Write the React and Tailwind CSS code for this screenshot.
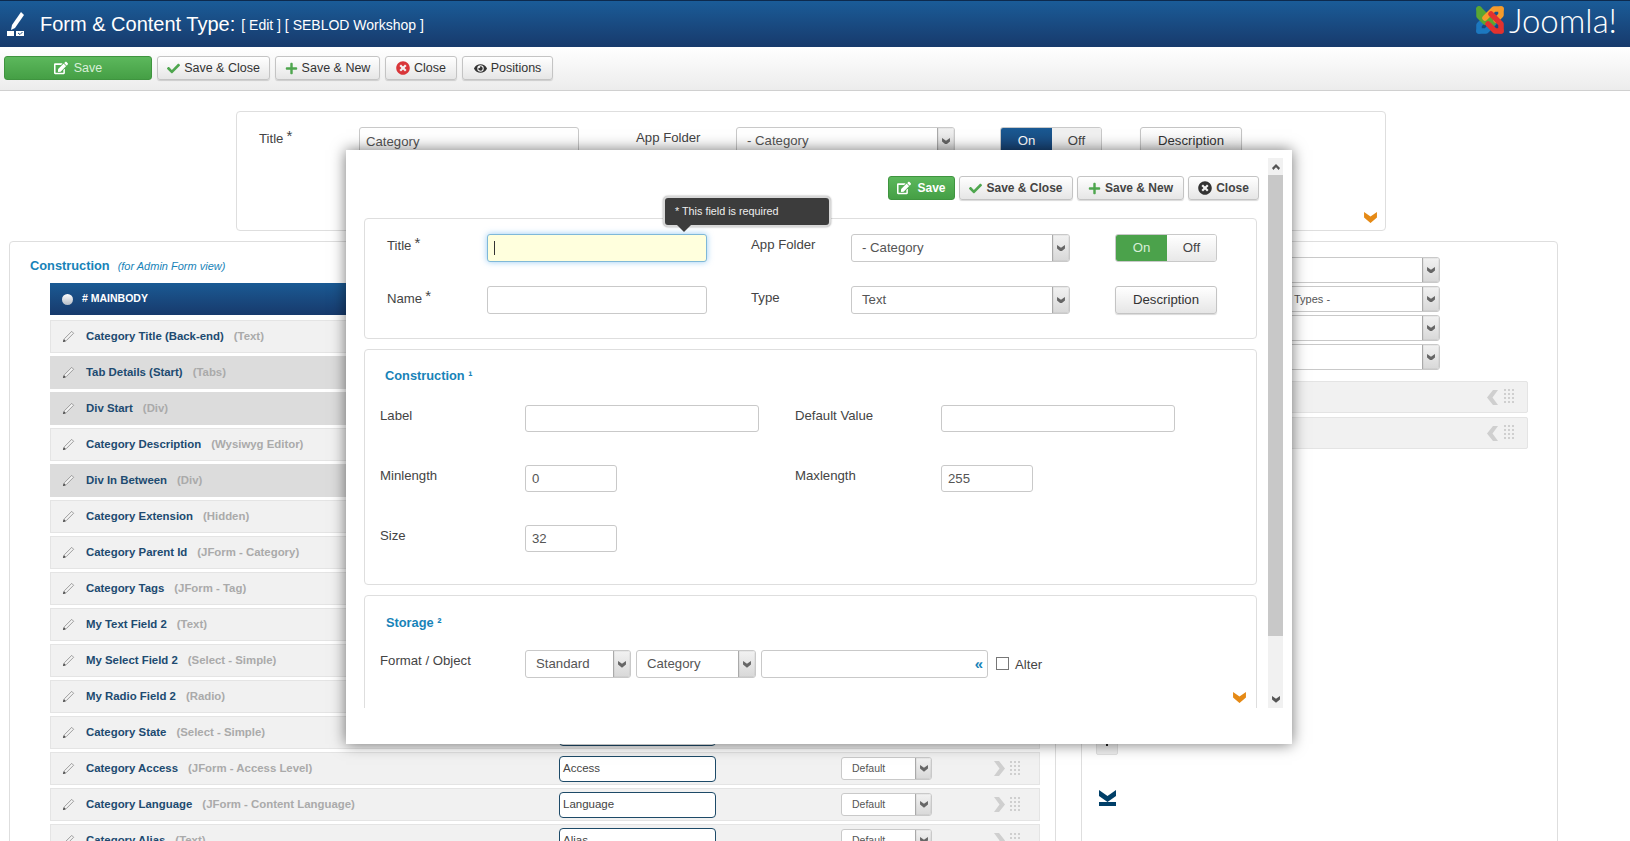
import { FaCheck, FaEdit, FaEye, FaPlus, FaTimesCircle } from 'react-icons/fa';

const rows = [
  { name: 'Category Title (Back-end)', type: '(Text)', field: 'Title' },
  { name: 'Tab Details (Start)', type: '(Tabs)', field: 'Details', dark: true },
  { name: 'Div Start', type: '(Div)', field: 'Div', dark: true },
  { name: 'Category Description', type: '(Wysiwyg Editor)', field: 'Description' },
  { name: 'Div In Between', type: '(Div)', field: 'Div', dark: true },
  { name: 'Category Extension', type: '(Hidden)', field: 'Extension' },
  { name: 'Category Parent Id', type: '(JForm - Category)', field: 'Parent' },
  { name: 'Category Tags', type: '(JForm - Tag)', field: 'Tags' },
  { name: 'My Text Field 2', type: '(Text)', field: 'Text' },
  { name: 'My Select Field 2', type: '(Select - Simple)', field: 'Select' },
  { name: 'My Radio Field 2', type: '(Radio)', field: 'Radio' },
  { name: 'Category State', type: '(Select - Simple)', field: 'State' },
  { name: 'Category Access', type: '(JForm - Access Level)', field: 'Access' },
  { name: 'Category Language', type: '(JForm - Content Language)', field: 'Language' },
  { name: 'Category Alias', type: '(Text)', field: 'Alias' },
];

function JoomlaLogo() {
  return (
    <svg width="32" height="32" viewBox="0 0 32 32" fill="none" strokeLinecap="round" strokeLinejoin="round">
      <path d="M5 27 L5 21 L13 13 L16 16" stroke="#1c78c0" strokeWidth="5.5" />
      <path d="M5 27 L12 27 L20 19" stroke="#1c78c0" strokeWidth="5.5" />
      <path d="M5 5 L16 16 L19 19" stroke="#5aa632" strokeWidth="5.5" />
      <path d="M5 5 L5 12 L11 18" stroke="#5aa632" strokeWidth="5.5" />
      <path d="M27 5 L20 5 L11 14" stroke="#f59b2b" strokeWidth="5.5" />
      <path d="M27 5 L27 11 L22 16" stroke="#f59b2b" strokeWidth="5.5" />
      <path d="M27 27 L27 20 L17 10" stroke="#e2322e" strokeWidth="5.5" />
      <path d="M27 27 L21 27 L14 20" stroke="#e2322e" strokeWidth="5.5" />
    </svg>
  );
}

function HeaderIcon() {
  return (
    <svg width="20" height="24" viewBox="0 0 20 24" fill="white">
      <path d="M15 0 L18 3 L9 16 L5 18 L6 13 Z" />
      <rect x="1" y="19" width="7" height="5" />
      <rect x="10" y="19" width="8" height="5" />
      <path d="M12 21 L14 22.5 L16.5 20" stroke="#1a4a80" strokeWidth="1" fill="none" />
    </svg>
  );
}

function PencilIcon() {
  return (
    <svg width="13" height="13" viewBox="0 0 14 14" fill="none">
      <path d="M1.5 12.5 L2.5 9.5 L10.5 1.5 L12.5 3.5 L4.5 11.5 Z" stroke="#8a8a8a" strokeWidth="0.9" fill="#f4f4f4" />
      <path d="M1 13 L2 10 L4 12 Z" fill="#444" />
    </svg>
  );
}

function Grip() {
  return (
    <svg width="12" height="16" viewBox="0 0 12 16" fill="#cfcfcf">
      {[0, 4, 8, 12].map((y) => [0, 4, 8].map((x) => <rect key={`${x}-${y}`} x={x} y={y} width="2" height="2" />))}
    </svg>
  );
}

// heavy chevrons, the icon set of the page draws them thicker than react-icons
function ChevronDown({ className = '', size = 13 }) {
  return (
    <svg className={className} width={size} height={size * 0.85} viewBox="0 0 14 12" fill="currentColor">
      <path d="M0 0 L7 5 L14 0 L14 6 L7 12 L0 6 Z" />
    </svg>
  );
}

function ChevronUp({ className = '', size = 8 }) {
  return (
    <svg className={className} width={size} height={size * 0.75} viewBox="0 0 12 9" fill="currentColor">
      <path d="M0 6 L6 0 L12 6 L10 9 L6 5 L2 9 Z" />
    </svg>
  );
}

function ChevronSide({ left = false }) {
  return (
    <svg width="11" height="15" viewBox="0 0 11 15" fill="#cfcfcf">
      <path d={left ? 'M11 0 L6 0 L0 7.5 L6 15 L11 15 L5.5 7.5 Z' : 'M0 0 L5 0 L11 7.5 L5 15 L0 15 L5.5 7.5 Z'} />
    </svg>
  );
}

function Button({ icon, children, className = '' }) {
  return (
    <button className={`flex h-[24px] items-center justify-center gap-1 rounded-[3px] border border-[#c4c4c4] bg-gradient-to-b from-white to-[#e6e6e6] text-[12.5px] text-[#333] shadow-[0_1px_1px_rgba(0,0,0,0.15)] ${className}`}>
      {icon}
      {children}
    </button>
  );
}

function ModalButton({ icon, children, className = '' }) {
  return (
    <button className={`flex h-[24px] items-center justify-center gap-1 rounded-[3px] border border-[#c4c4c4] bg-gradient-to-b from-white to-[#e6e6e6] text-[12px] font-bold text-[#444] shadow-[0_1px_1px_rgba(0,0,0,0.15)] ${className}`}>
      {icon}
      {children}
    </button>
  );
}

function Select({ value, className = '', arrow = 'w-[17px]', pad = 'pl-[10px]' }) {
  return (
    <div className={`flex items-stretch overflow-hidden rounded-[3px] border border-[#c9c9c9] bg-white ${className}`}>
      <span className={`flex flex-1 items-center truncate text-[#555] ${pad}`}>{value}</span>
      <span className={`flex items-center justify-center border-l border-[#aaa] bg-gradient-to-b from-[#f2f2f2] to-[#d8d8d8] shadow-[inset_0_0_1px_#888] ${arrow}`}>
        <ChevronDown size={8} className="text-[#666]" />
      </span>
    </div>
  );
}

function Input({ className = '' }) {
  return <div className={`rounded-[3px] border border-[#c9c9c9] bg-white ${className}`} />;
}

function Star() {
  return <span className="relative top-[-2px] ml-[3px] text-[15px]">*</span>;
}

function Row({ row }) {
  const bg = row.dark ? 'bg-[#dcdcdc] border-[#dcdcdc]' : 'bg-[#f1f1f1] border-[#e4e4e4]';
  return (
    <div className={`flex h-[33px] items-center border pl-[11px] ${bg}`}>
      <div className="flex w-[497px] items-center">
        <PencilIcon />
        <span className="ml-[11px] text-[11.4px] font-bold text-[#204a70]">{row.name}</span>
        <span className="ml-[10px] text-[11.4px] font-bold text-[#aaa]">{row.type}</span>
      </div>
      <div className="flex h-[26px] w-[157px] items-center rounded-[4px] border border-[#1d4a68] bg-white pl-[3px] text-[11.5px] text-[#444]">{row.field}</div>
      <Select value="Default" className="ml-[125px] h-[23px] w-[91px] text-[10.5px]" arrow="w-[16px]" />
      <span className="ml-[62px] flex"><ChevronSide /></span>
      <span className="ml-[5px] flex"><Grip /></span>
    </div>
  );
}

function SideRow() {
  return (
    <div className="flex h-[32px] w-[432px] items-center justify-end rounded-[2px] border border-[#e4e4e4] bg-[#f1f1f1] pr-[11px]">
      <ChevronSide left />
      <span className="ml-[6px] flex"><Grip /></span>
    </div>
  );
}

function PageBehind() {
  return (
    <main>
      <section className="ml-[236px] mt-[20px] h-[120px] w-[1150px] rounded-[4px] border border-[#dedede] pl-[22px] pt-[15px] text-[13.2px] text-[#444]">
        <div className="flex items-start">
          <span className="w-[100px]">Title<Star /></span>
          <div className="flex h-[28px] w-[220px] items-center rounded-[3px] border border-[#c9c9c9] pl-[6px] pt-[1px] text-[#555]">Category</div>
          <span className="ml-[57px] mt-[1px] w-[100px]">App Folder</span>
          <Select value="- Category" className="h-[28px] w-[219px]" />
          <div className="ml-[45px] flex h-[28px] w-[102px] overflow-hidden rounded-[3px] border border-[#c9c9c9]">
            <span className="flex w-[51px] items-center justify-center bg-gradient-to-b from-[#1a5a94] to-[#173f70] text-white">On</span>
            <span className="flex flex-1 items-center justify-center bg-[#f0f0f0]">Off</span>
          </div>
          <Button className="ml-[38px] !h-[28px] w-[102px] !text-[13.2px]">Description</Button>
        </div>
        <div className="flex justify-end pr-[8px] pt-[57px]">
          <ChevronDown size={13} className="text-[#e58a16]" />
        </div>
      </section>

      <section className="ml-[9px] mt-[10px] flex h-[700px] w-[1549px] rounded-[4px] border border-[#dedede]">
        <div className="w-[1046px] shrink-0 border-r border-[#dedede] pl-[20px] pt-[14px]">
          <div className="flex items-baseline gap-[8px]">
            <span className="text-[12.8px] font-bold text-[#1883b8]">Construction</span>
            <span className="text-[11px] italic text-[#1883b8]">(for Admin Form view)</span>
          </div>
          <div className="ml-[20px] mt-[8px] w-[990px]">
            <div className="flex h-[32px] items-center bg-gradient-to-b from-[#1a5a94] to-[#173a6c] pl-[12px]">
              <span className="h-[11px] w-[11px] rounded-full bg-gradient-to-b from-white to-[#b5bcc6]" />
              <span className="ml-[9px] text-[10.5px] font-bold text-white"># MAINBODY</span>
            </div>
            <div className="mt-[5px] flex flex-col gap-[3px]">
              {rows.map((row) => <Row key={row.name} row={row} />)}
            </div>
          </div>
        </div>
        <div className="ml-[25px] flex-1 border-l border-[#dedede] pl-[14px] pt-[15px]">
          <div className="flex flex-col gap-[3px]">
            {['', '- Select Object Types -', '', ''].map((v, i) => (
              <Select key={i} value={v} pad={v ? 'pl-[122px]' : 'pl-[10px]'} className="h-[26px] w-[344px] text-[11px]" />
            ))}
          </div>
          <div className="mt-[11px] flex flex-col gap-[4px]">
            <SideRow />
            <SideRow />
          </div>
          <div className="mt-[266px] flex h-[40px] w-[22px] items-end justify-center rounded-b-[2px] border border-[#e0e0e0] bg-[#eee] pb-[8px]">
            <span className="h-[2px] w-[2px] bg-[#222]" />
          </div>
          <svg className="ml-[3px] mt-[35px]" width="17" height="16" viewBox="0 0 17 16" fill="#003f68">
            <path d="M0 0 L8.5 6 L17 0 L17 6 L8.5 12 L0 6 Z" />
            <rect x="0" y="12" width="17" height="4" />
          </svg>
        </div>
      </section>
    </main>
  );
}

function Modal() {
  return (
    <div className="absolute left-[346px] top-[150px] flex h-[594px] w-[946px] items-start bg-white shadow-[0_0_14px_rgba(0,0,0,0.55)]">
      <div className="h-[558px] w-[922px] shrink-0 overflow-hidden pt-[26px] text-[13.2px] text-[#444]">
        <div className="flex justify-end gap-[4px] pr-[9px]">
          <button className="flex h-[24px] w-[67px] items-center justify-center gap-[6px] rounded-[3px] border border-[#3f943f] bg-gradient-to-b from-[#5cb85c] to-[#459f45] text-[12px] font-bold text-white">
            <FaEdit className="text-[14px]" />Save
          </button>
          <ModalButton className="w-[114px]" icon={<FaCheck className="text-[13px] text-[#4ea64e]" />}>Save &amp; Close</ModalButton>
          <ModalButton className="w-[107px]" icon={<FaPlus className="text-[13px] text-[#4ea64e]" />}>Save &amp; New</ModalButton>
          <ModalButton className="w-[71px]" icon={<FaTimesCircle className="text-[14px] text-[#333]" />}>Close</ModalButton>
        </div>

        <section className="relative ml-[18px] mt-[18px] h-[121px] w-[893px] rounded-[4px] border border-[#dedede] pl-[22px] pt-[15px]">
          <div className="flex">
            <span className="w-[100px]">Title<Star /></span>
            <div className="relative h-[28px] w-[220px] rounded-[3px] border border-[#7fb8d8] bg-[#ffffdd] shadow-[0_0_6px_rgba(82,168,236,0.6)]">
              <span className="absolute left-[6px] top-[6px] h-[14px] w-px bg-[#333]" />
            </div>
            <span className="ml-[44px] mt-[1px] w-[100px]">App Folder</span>
            <Select value="- Category" className="h-[28px] w-[219px]" />
            <div className="ml-[45px] flex h-[28px] w-[102px] overflow-hidden rounded-[3px] border border-[#c9c9c9]">
              <span className="flex w-[51px] items-center justify-center bg-[#4ba24b] text-[#d8efd8]">On</span>
              <span className="flex flex-1 items-center justify-center bg-gradient-to-b from-white to-[#e8e8e8]">Off</span>
            </div>
          </div>
          <div className="mt-[24px] flex">
            <span className="mt-[1px] w-[100px]">Name<Star /></span>
            <Input className="h-[28px] w-[220px]" />
            <span className="ml-[44px] mt-[2px] w-[100px]">Type</span>
            <Select value="Text" className="h-[28px] w-[219px]" />
            <Button className="ml-[45px] !h-[28px] w-[102px] !text-[13.2px]">Description</Button>
          </div>
        </section>

        <section className="ml-[18px] mt-[10px] h-[236px] w-[893px] rounded-[4px] border border-[#dedede] pl-[15px] pt-[16px]">
          <h2 className="ml-[5px] text-[12.8px] font-bold text-[#1883b8]">Construction ¹</h2>
          <div className="mt-[20px] flex">
            <span className="mt-[1px] w-[145px]">Label</span>
            <Input className="h-[27px] w-[234px]" />
            <span className="ml-[36px] mt-[1px] w-[146px]">Default Value</span>
            <Input className="h-[27px] w-[234px]" />
          </div>
          <div className="mt-[33px] flex">
            <span className="mt-[1px] w-[145px]">Minlength</span>
            <div className="flex h-[27px] w-[92px] items-center rounded-[3px] border border-[#c9c9c9] pl-[6px] text-[#555]">0</div>
            <span className="ml-[178px] mt-[1px] w-[146px]">Maxlength</span>
            <div className="flex h-[27px] w-[92px] items-center rounded-[3px] border border-[#c9c9c9] pl-[6px] text-[#555]">255</div>
          </div>
          <div className="mt-[33px] flex">
            <span className="mt-[1px] w-[145px]">Size</span>
            <div className="flex h-[27px] w-[92px] items-center rounded-[3px] border border-[#c9c9c9] pl-[6px] text-[#555]">32</div>
          </div>
        </section>

        <section className="relative ml-[18px] mt-[10px] h-[140px] w-[893px] rounded-[4px] border border-[#dedede] pl-[15px] pt-[17px]">
          <h2 className="ml-[6px] text-[12.8px] font-bold text-[#1883b8]">Storage ²</h2>
          <div className="mt-[18px] flex items-start">
            <span className="mt-[1px] w-[145px]">Format / Object</span>
            <Select value="Standard" className="h-[28px] w-[106px]" />
            <Select value="Category" className="ml-[5px] h-[28px] w-[120px]" />
            <div className="ml-[5px] flex h-[28px] w-[227px] items-center justify-end rounded-[3px] border border-[#c9c9c9] pr-[4px] text-[15px] font-bold text-[#1883b8]">«</div>
            <span className="ml-[8px] mt-[7px] h-[13px] w-[13px] border border-[#777] bg-white" />
            <span className="ml-[6px] mt-[5px]">Alter</span>
          </div>
          <div className="flex justify-end pr-[10px] pt-[14px]">
            <ChevronDown size={13} className="text-[#e58a16]" />
          </div>
        </section>
      </div>

      <div className="mt-[8px] flex h-[550px] w-[15px] flex-col bg-[#f1f1f1]">
        <span className="flex h-[17px] items-center justify-center"><ChevronUp className="text-[#555]" /></span>
        <span className="h-[461px] bg-[#c8c8c8]" />
        <span className="mt-auto flex h-[17px] items-center justify-center"><ChevronDown size={8} className="text-[#555]" /></span>
      </div>

      <div className="absolute left-[317px] top-[46px] flex h-[31px] w-[168px] items-center rounded-[5px] border-2 border-[#d8d8d8] bg-[#3c3c3c] pl-[10px] text-[10.8px] text-[#eee] shadow-[0_0_2px_rgba(0,0,0,0.4)]">
        * This field is required
        <span className="absolute left-[12px] top-[27px] h-0 w-0 border-x-[7px] border-t-[7px] border-x-transparent border-t-[#3c3c3c]" />
      </div>
    </div>
  );
}

export default function App() {
  return (
    <div className="relative h-[841px] w-[1630px] overflow-hidden bg-white font-['Liberation_Sans',Arial,sans-serif]">
      <header className="flex h-[47px] items-center border-t border-[#0d2a4d] bg-gradient-to-b from-[#1a5c98] to-[#173a6c] pl-[6px] pr-[13px]">
        <HeaderIcon />
        <h1 className="ml-[14px] text-[20px] text-white">Form &amp; Content Type:</h1>
        <span className="ml-[6px] mt-[3px] text-[14px] text-white">[ Edit ] [ SEBLOD Workshop ]</span>
        <div className="mb-[8px] ml-auto flex items-center gap-[3px]">
          <JoomlaLogo />
          <span className="font-['Lato',sans-serif] text-[33px] font-light leading-none text-white">Joomla!</span>
        </div>
      </header>
      <div className="flex h-[44px] gap-[5px] border-b border-[#d0d0d0] bg-gradient-to-b from-white to-[#ececec] pl-[4px] pt-[9px]">
        <button className="flex h-[24px] w-[148px] items-center justify-center gap-[6px] rounded-[3px] border border-[#3f943f] bg-gradient-to-b from-[#5cb85c] to-[#459f45] text-[12.5px] text-[#d9efd9]">
          <FaEdit className="text-[14px] text-white" />Save
        </button>
        <Button className="w-[113px]" icon={<FaCheck className="text-[13px] text-[#4ea64e]" />}>Save &amp; Close</Button>
        <Button className="w-[105px]" icon={<FaPlus className="text-[13px] text-[#4ea64e]" />}>Save &amp; New</Button>
        <Button className="w-[72px]" icon={<FaTimesCircle className="text-[14px] text-[#d9363a]" />}>Close</Button>
        <Button className="w-[91px]" icon={<FaEye className="text-[13px] text-[#333]" />}>Positions</Button>
      </div>
      <PageBehind />
      <Modal />
    </div>
  );
}
